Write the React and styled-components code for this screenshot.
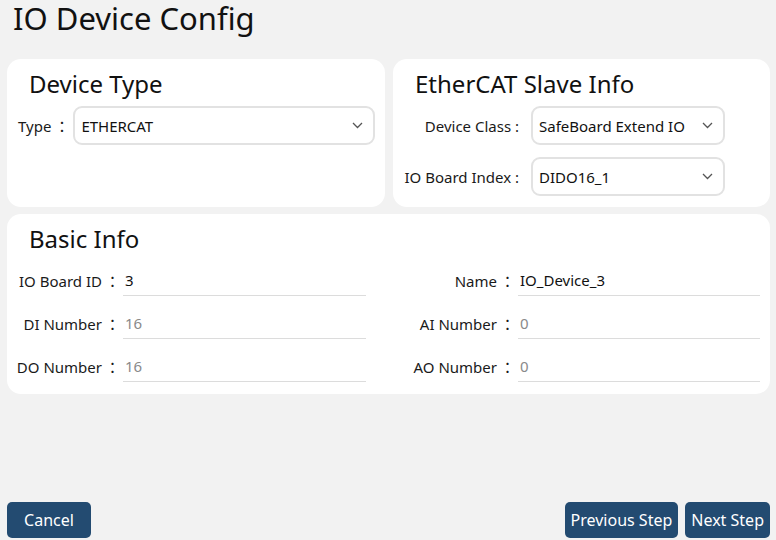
import React from 'react';
import styled, { createGlobalStyle } from 'styled-components';

const GlobalStyle = createGlobalStyle`
  html, body {
    margin: 0;
    padding: 0;
    background: #f2f2f2;
  }
  body {
    font-family: "Noto Sans", "Noto Sans CJK JP", sans-serif;
    color: #111;
  }
  * { box-sizing: border-box; }
`;

const Page = styled.div`
  width: 776px;
  height: 540px;
  padding: 0 6px 2px 7px;
  display: flex;
  flex-direction: column;
  background: #f2f2f2;
`;

const Title = styled.h1`
  margin: 0;
  padding-left: 6px;
  font-size: 31px;
  font-weight: 400;
  line-height: 36px;
  height: 59px;
  color: #111;
`;

const TopRow = styled.div`
  display: grid;
  grid-template-columns: 378px 377px;
  gap: 8px;
  height: 148px;
`;

const Card = styled.section`
  background: #fff;
  border-radius: 14px;
  padding: 9px ${(p) => p.$padRight || 10}px 10px ${(p) => p.$padLeft || 11}px;
  display: flex;
  flex-direction: column;
`;

const CardTitle = styled.h2`
  margin: 0 0 6px 0;
  padding-left: 11px;
  font-size: 24px;
  font-weight: 400;
  line-height: 32px;
  color: #111;
`;

const SelectRow = styled.div`
  display: flex;
  align-items: center;
  gap: ${(p) => p.$gap || 6}px;
  & + & {
    margin-top: 12px;
  }
`;

const Label = styled.span`
  font-size: 15px;
  color: #1a1a1a;
  white-space: nowrap;
  text-align: right;
  ${(p) => p.$width && `width: ${p.$width}px; flex: none;`}
`;

const Colon = styled.span`
  display: inline-block;
  width: 15px;
  margin-left: 3px;
  text-align: center;
  font-family: "Noto Sans CJK JP", sans-serif;
`;

const SelectBox = styled.div`
  flex: ${(p) => (p.$width ? 'none' : '1')};
  width: ${(p) => (p.$width ? `${p.$width}px` : 'auto')};
  height: 39px;
  border: 2px solid #e2e2e2;
  border-radius: 9px;
  display: flex;
  align-items: center;
  justify-content: space-between;
  padding: 0 10px 0 6px;
  font-size: 15px;
  color: #111;
  background: #fff;
`;

const Chevron = () => (
  <svg width="11" height="7" viewBox="0 0 11 7" fill="none">
    <path d="M1 1l4.5 4.5L10 1" stroke="#555" strokeWidth="1.3" />
  </svg>
);

const BasicCard = styled(Card)`
  margin-top: 7px;
  padding: 9px 10px 12px 0;
  height: 180px;
`;

const BasicTitle = styled(CardTitle)`
  padding-left: 22px;
  margin-bottom: 9px;
`;

const FieldGrid = styled.div`
  display: grid;
  grid-template-columns: 113px 243px 146px 242px;
  column-gap: 3px;
  row-gap: 11px;
  align-items: center;
`;

const FieldLabel = styled.span`
  font-size: 15px;
  text-align: right;
  color: #1a1a1a;
  white-space: nowrap;
`;

const FieldInput = styled.input`
  height: 32px;
  border: none;
  border-bottom: 1px solid #dcdcdc;
  outline: none;
  padding: 0 2px;
  font-family: "Noto Sans", "Noto Sans CJK JP", sans-serif;
  font-size: 15px;
  color: ${(p) => (p.$muted ? '#8a8a8a' : '#111')};
  background: transparent;
`;

const Spacer = styled.div`
  flex: 1;
`;

const Footer = styled.div`
  display: flex;
  align-items: center;
  gap: 7px;
`;

const Button = styled.button`
  height: 36px;
  min-width: 84px;
  padding: 0 6px;
  border: none;
  border-radius: 5px;
  background: #234b71;
  color: #fff;
  font-family: "Noto Sans", "Noto Sans CJK JP", sans-serif;
  font-size: 16px;
  cursor: pointer;
`;

const fields = [
  ['IO Board ID', '3', false, 'Name', 'IO_Device_3', false],
  ['DI Number', '16', true, 'AI Number', '0', true],
  ['DO Number', '16', true, 'AO Number', '0', true],
];

export default function App() {
  return (
    <Page>
      <GlobalStyle />
      <Title>IO Device Config</Title>
      <TopRow>
        <Card>
          <CardTitle>Device Type</CardTitle>
          <SelectRow $gap={4}>
            <Label>
              Type<Colon>：</Colon>
            </Label>
            <SelectBox>
              ETHERCAT
              <Chevron />
            </SelectBox>
          </SelectRow>
        </Card>
        <Card $padLeft={11} $padRight={45}>
          <CardTitle>EtherCAT Slave Info</CardTitle>
          <SelectRow $gap={12}>
            <Label $width={115}>Device Class :</Label>
            <SelectBox $width={194}>
              SafeBoard Extend IO
              <Chevron />
            </SelectBox>
          </SelectRow>
          <SelectRow $gap={12}>
            <Label $width={115}>IO Board Index :</Label>
            <SelectBox $width={194}>
              DIDO16_1
              <Chevron />
            </SelectBox>
          </SelectRow>
        </Card>
      </TopRow>
      <BasicCard>
        <BasicTitle>Basic Info</BasicTitle>
        <FieldGrid>
          {fields.map(([l1, v1, m1, l2, v2, m2]) => (
            <React.Fragment key={l1}>
              <FieldLabel>
                {l1}<Colon>：</Colon>
              </FieldLabel>
              <FieldInput readOnly value={v1} $muted={m1} />
              <FieldLabel>
                {l2}<Colon>：</Colon>
              </FieldLabel>
              <FieldInput readOnly value={v2} $muted={m2} />
            </React.Fragment>
          ))}
        </FieldGrid>
      </BasicCard>
      <Spacer />
      <Footer>
        <Button>Cancel</Button>
        <Spacer />
        <Button>Previous Step</Button>
        <Button>Next Step</Button>
      </Footer>
    </Page>
  );
}
